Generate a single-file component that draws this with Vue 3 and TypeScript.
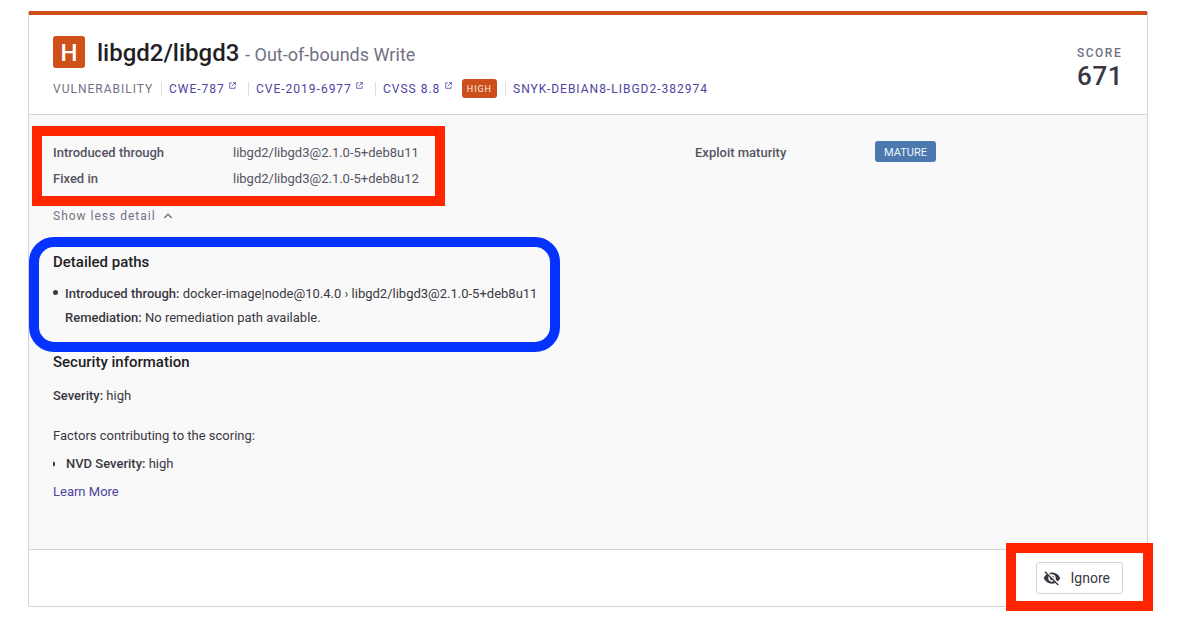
<script setup lang="ts">
interface Reference {
  label: string
  external: boolean
  badge?: string
  cls: string
}

const references: Reference[] = [
  { label: 'CWE-787', external: true, cls: 'cwe' },
  { label: 'CVE-2019-6977', external: true, cls: 'cve' },
  { label: 'CVSS 8.8', external: true, badge: 'HIGH', cls: 'cvss' },
  { label: 'SNYK-DEBIAN8-LIBGD2-382974', external: false, cls: 'snyk' },
]

const facts = [
  { term: 'Introduced through', value: 'libgd2/libgd3@2.1.0-5+deb8u11' },
  { term: 'Fixed in', value: 'libgd2/libgd3@2.1.0-5+deb8u12' },
]
</script>

<template>
  <main class="page">
    <article class="card">
      <header class="head">
        <div class="summary">
          <div class="title-row">
            <span class="severity">H</span>
            <h1 class="title">libgd2/libgd3</h1>
            <span class="subtitle">- Out-of-bounds Write</span>
          </div>
          <div class="meta">
            <span class="kind">VULNERABILITY</span>
            <span v-for="item in references" :key="item.label" class="ref" :class="item.cls">
              <a class="ref-link">{{ item.label }}</a>
              <svg v-if="item.external" class="ext" viewBox="0 0 7 7" fill="none" stroke="currentColor" stroke-width="0.8">
                <path d="M2.8 .9H.7V6.3H6.1V4.2M4 .6H6.4V3M6.2.8 2.7 4.3" />
              </svg>
              <span v-if="item.badge" class="high">{{ item.badge }}</span>
            </span>
          </div>
        </div>
        <div class="score">
          <span class="score-label">SCORE</span>
          <span class="score-value">671</span>
        </div>
      </header>

      <section class="body">
        <div class="facts">
          <dl class="col">
            <div v-for="fact in facts" :key="fact.term" class="fact">
              <dt>{{ fact.term }}</dt>
              <dd>{{ fact.value }}</dd>
            </div>
          </dl>
          <dl class="col">
            <div class="fact">
              <dt>Exploit maturity</dt>
              <dd><span class="mature">MATURE</span></dd>
            </div>
          </dl>
        </div>

        <div class="toggle">
          <span class="toggle-text">Show less detail</span>
          <svg class="chevron" viewBox="0 0 10 6" fill="none" stroke="currentColor" stroke-width="1.3">
            <path d="M1.2 5 5 1.2 8.8 5" />
          </svg>
        </div>

        <h2 class="heading paths-heading">Detailed paths</h2>
        <ul class="paths">
          <li>
            <p class="line"><b>Introduced through:</b> <span class="route">docker-image|node@10.4.0 › libgd2/libgd3@2.1.0-5+deb8u11</span></p>
            <p class="line"><b>Remediation:</b> <span class="remedy">No remediation path available.</span></p>
          </li>
        </ul>

        <h2 class="heading security-heading">Security information</h2>
        <p class="text level"><b>Severity:</b> high</p>
        <p class="text factors">Factors contributing to the scoring:</p>
        <p class="text nvd">
          <svg class="marker" viewBox="0 0 3 6"><path d="M0 .5C1.2 .7 2.1 1.7 2.1 3S1.2 5.3 0 5.5Z" fill="currentColor" /></svg>
          <span><b>NVD Severity:</b> high</span>
        </p>
        <a class="text learn">Learn More</a>
      </section>

      <footer class="foot">
        <button class="ignore" type="button">
          <svg class="eye" viewBox="0 0 24 24" fill="currentColor">
            <path d="M12 7c2.76 0 5 2.24 5 5 0 .65-.13 1.26-.36 1.83l2.92 2.92c1.51-1.26 2.7-2.89 3.43-4.75-1.73-4.39-6-7.5-11-7.5-1.4 0-2.74.25-3.98.7l2.16 2.16C10.74 7.13 11.35 7 12 7zM2 4.27l2.28 2.28.46.46C3.08 8.3 1.78 10.02 1 12c1.73 4.39 6 7.5 11 7.5 1.55 0 3.03-.3 4.38-.84l.42.42L19.73 22 21 20.73 3.27 3 2 4.27zM7.53 9.8l1.55 1.55c-.05.21-.08.43-.08.65 0 1.66 1.34 3 3 3 .22 0 .44-.03.65-.08l1.55 1.55c-.67.33-1.41.53-2.2.53-2.76 0-5-2.24-5-5 0-.79.2-1.53.53-2.2zm4.31-.78l3.15 3.15.02-.16c0-1.66-1.34-3-3-3l-.17.01z" />
          </svg>
          <span>Ignore</span>
        </button>
      </footer>
    </article>

    <div class="mark mark-facts"></div>
    <div class="mark mark-paths"></div>
    <div class="mark mark-ignore"></div>
  </main>
</template>

<style>
body { background: #fff; }
</style>

<style scoped>
* { box-sizing: border-box; }
.page {
  position: relative;
  width: 1180px;
  height: 620px;
  overflow: hidden;
  padding: 11px 32px 0 28px;
  background: #fff;
  color: #393842;
  font-family: Roboto, "Liberation Sans", sans-serif;
  font-size: 13px;
}
h1, h2, p, dl, dd, ul { margin: 0; padding: 0; }
b, dt { font-weight: 500; }
.card {
  display: flex;
  flex-direction: column;
  height: 596px;
  border: 1px solid #d3d3d9;
  border-top: 4px solid #cc4e18;
  border-radius: 2px;
}
.head {
  display: flex;
  justify-content: space-between;
  height: 100px;
  padding: 21px 25px 0 24px;
  border-bottom: 1px solid #d3d3d9;
}
.title-row { display: flex; height: 32px; line-height: 35px; }
.severity {
  width: 32px;
  height: 32px;
  margin-right: 12px;
  border-radius: 3px;
  background: #cf5019;
  color: #fff;
  font-size: 24px;
  font-weight: 500;
  line-height: 34px;
  text-align: center;
}
.title { width: 148px; color: #1f1f25; font-size: 24px; font-weight: 500; line-height: 35px; white-space: nowrap; }
.subtitle { color: #727184; font-size: 18px; letter-spacing: .02px; line-height: 37px; }
.meta { display: flex; align-items: center; height: 19px; margin-top: 11px; font-size: 12px; letter-spacing: 1px; }
.kind { width: 108px; color: #727184; line-height: 19px; padding-top: 1px; }
.ref { display: flex; align-items: center; height: 14px; padding-left: 7px; border-left: 1px solid #dedee3; color: #4b45a1; white-space: nowrap; }
.ref-link { line-height: 19px; padding-top: 1px; }
.cwe { width: 87px; }
.cve { width: 127px; }
.cvss { width: 130px; }
.ext { width: 7px; height: 7px; margin: -6px 0 0 4.5px; }
.high { width: 35px; height: 19px; margin-left: 10px; border-radius: 3px; background: #cc4e18; color: #fbe9e1; font-size: 9px; letter-spacing: .9px; text-align: center; line-height: 20px; }
.score { display: flex; flex-direction: column; width: 45px; padding-top: 9px; }
.score-label { height: 16px; color: #727184; font-size: 12px; font-weight: 500; letter-spacing: 1.5px; line-height: 16px; }
.score-value { color: #393842; font-size: 26px; font-weight: 500; letter-spacing: .6px; line-height: 30px; }
.body { height: 435px; padding: 25px 24px 0; border-bottom: 1px solid #d3d3d9; background: #f9f9f9; }
.facts { display: flex; height: 65px; color: #555463; }
.col { width: 642px; flex: none; }
.col + .col { width: 300px; }
.fact { display: flex; height: 26px; line-height: 26px; }
.fact dt { width: 180px; }
.mature { display: block; width: 61px; height: 21px; margin-top: 1px; border-radius: 3px; background: #4b78ad; color: #eef4fb; font-size: 11px; line-height: 23px; text-align: center; }
.toggle { display: flex; align-items: center; height: 22px; color: #727184; font-size: 12px; letter-spacing: 1px; }
.chevron { width: 10px; height: 6px; margin-left: 7px; }
.heading { color: #1f1f25; font-size: 15px; font-weight: 500; line-height: 20px; }
.paths-heading { margin-top: 25px; }
.paths { margin-top: 10px; list-style: none; }
.paths li { position: relative; padding-left: 12px; }
.paths li::before { content: ""; position: absolute; left: 0; top: 8px; width: 5px; height: 4.5px; border-radius: 50%; background: #393842; }
.line { line-height: 24px; white-space: nowrap; }
.security-heading { margin-top: 22px; }
.text { display: block; line-height: 20px; }
.level { margin-top: 14px; }
.factors { margin-top: 20px; }
.nvd { display: flex; align-items: center; margin-top: 8px; }
.marker { width: 3px; height: 6px; margin-right: 10px; }
.learn { margin-top: 8px; color: #4b45a1; }
.foot { display: flex; justify-content: flex-end; align-items: flex-start; padding: 12px 24px 0; }
.ignore { display: flex; align-items: center; width: 87px; height: 32px; padding: 0 0 0 6px; border: 1px solid #d3d3d9; border-radius: 3px; background: #fff; color: #393842; font: 14px Roboto, "Liberation Sans", sans-serif; }
.eye { width: 18px; height: 18px; margin-right: 9.5px; }
.mark { position: absolute; border: 10px solid #ff2600; }
.mark-facts { left: 32px; top: 126px; width: 413px; height: 80px; }
.mark-paths { left: 29px; top: 237px; width: 531px; height: 115px; border-color: #0433ff; border-radius: 25px; }
.mark-ignore { left: 1006px; top: 543px; width: 147px; height: 68px; }
</style>
